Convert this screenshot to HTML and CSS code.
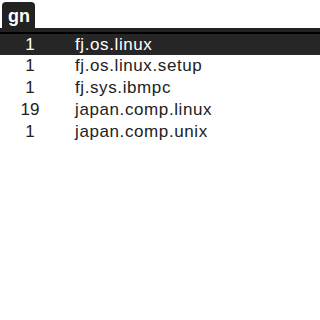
FILE: index.html
```html
<!DOCTYPE html>
<html lang="ja">

<head>
    <meta charset="UTF-8">
    <meta name="viewport" content="width=device-width, initial-scale=1.0">
    <title>gn</title>
    <link rel="stylesheet" href="styles.css">
</head>

<body>

    <div class="tela">
        <div class="barra-titulo">
            <span class="aba">gn</span>
        </div>

        <ul class="lista-grupos">
            <li class="selecionado"><span class="qtd">1</span><span class="nome">fj.os.linux</span></li>
            <li><span class="qtd">1</span><span class="nome">fj.os.linux.setup</span></li>
            <li><span class="qtd">1</span><span class="nome">fj.sys.ibmpc</span></li>
            <li><span class="qtd">19</span><span class="nome">japan.comp.linux</span></li>
            <li><span class="qtd">1</span><span class="nome">japan.comp.unix</span></li>
        </ul>
    </div>

</body>

</html>
```
FILE: styles.css
```css
body {
    margin: 0;
    background-color: #ffffff;
    font-family: "Liberation Sans", Arial, sans-serif;
    color: #222222;
}

.tela {
    width: 320px;
    height: 320px;
}

.barra-titulo {
    display: flex;
    height: 34px;
    padding-top: 2px;
    box-sizing: border-box;
    border-bottom: 2px solid #000000;
    background: linear-gradient(to bottom, #ffffff 28px, #222222 28px);
}

.aba {
    margin-left: 2px;
    width: 33px;
    height: 30px;
    box-sizing: border-box;
    padding: 4px 0 0 6px;
    background-color: #222222;
    border-radius: 4px 4px 0 0;
    color: #ffffff;
    font-weight: bold;
    font-size: 18px;
}

.lista-grupos {
    list-style-type: none;
    margin: 0;
    padding: 0;
}

.lista-grupos li {
    display: flex;
    align-items: center;
    height: 22px;
    font-size: 17px;
}

.lista-grupos li.selecionado {
    height: 21px;
    background-color: #262626;
    color: #ffffff;
}

.qtd {
    width: 60px;
    text-align: center;
}

.nome {
    margin-left: 15px;
    letter-spacing: 0.6px;
}
```
